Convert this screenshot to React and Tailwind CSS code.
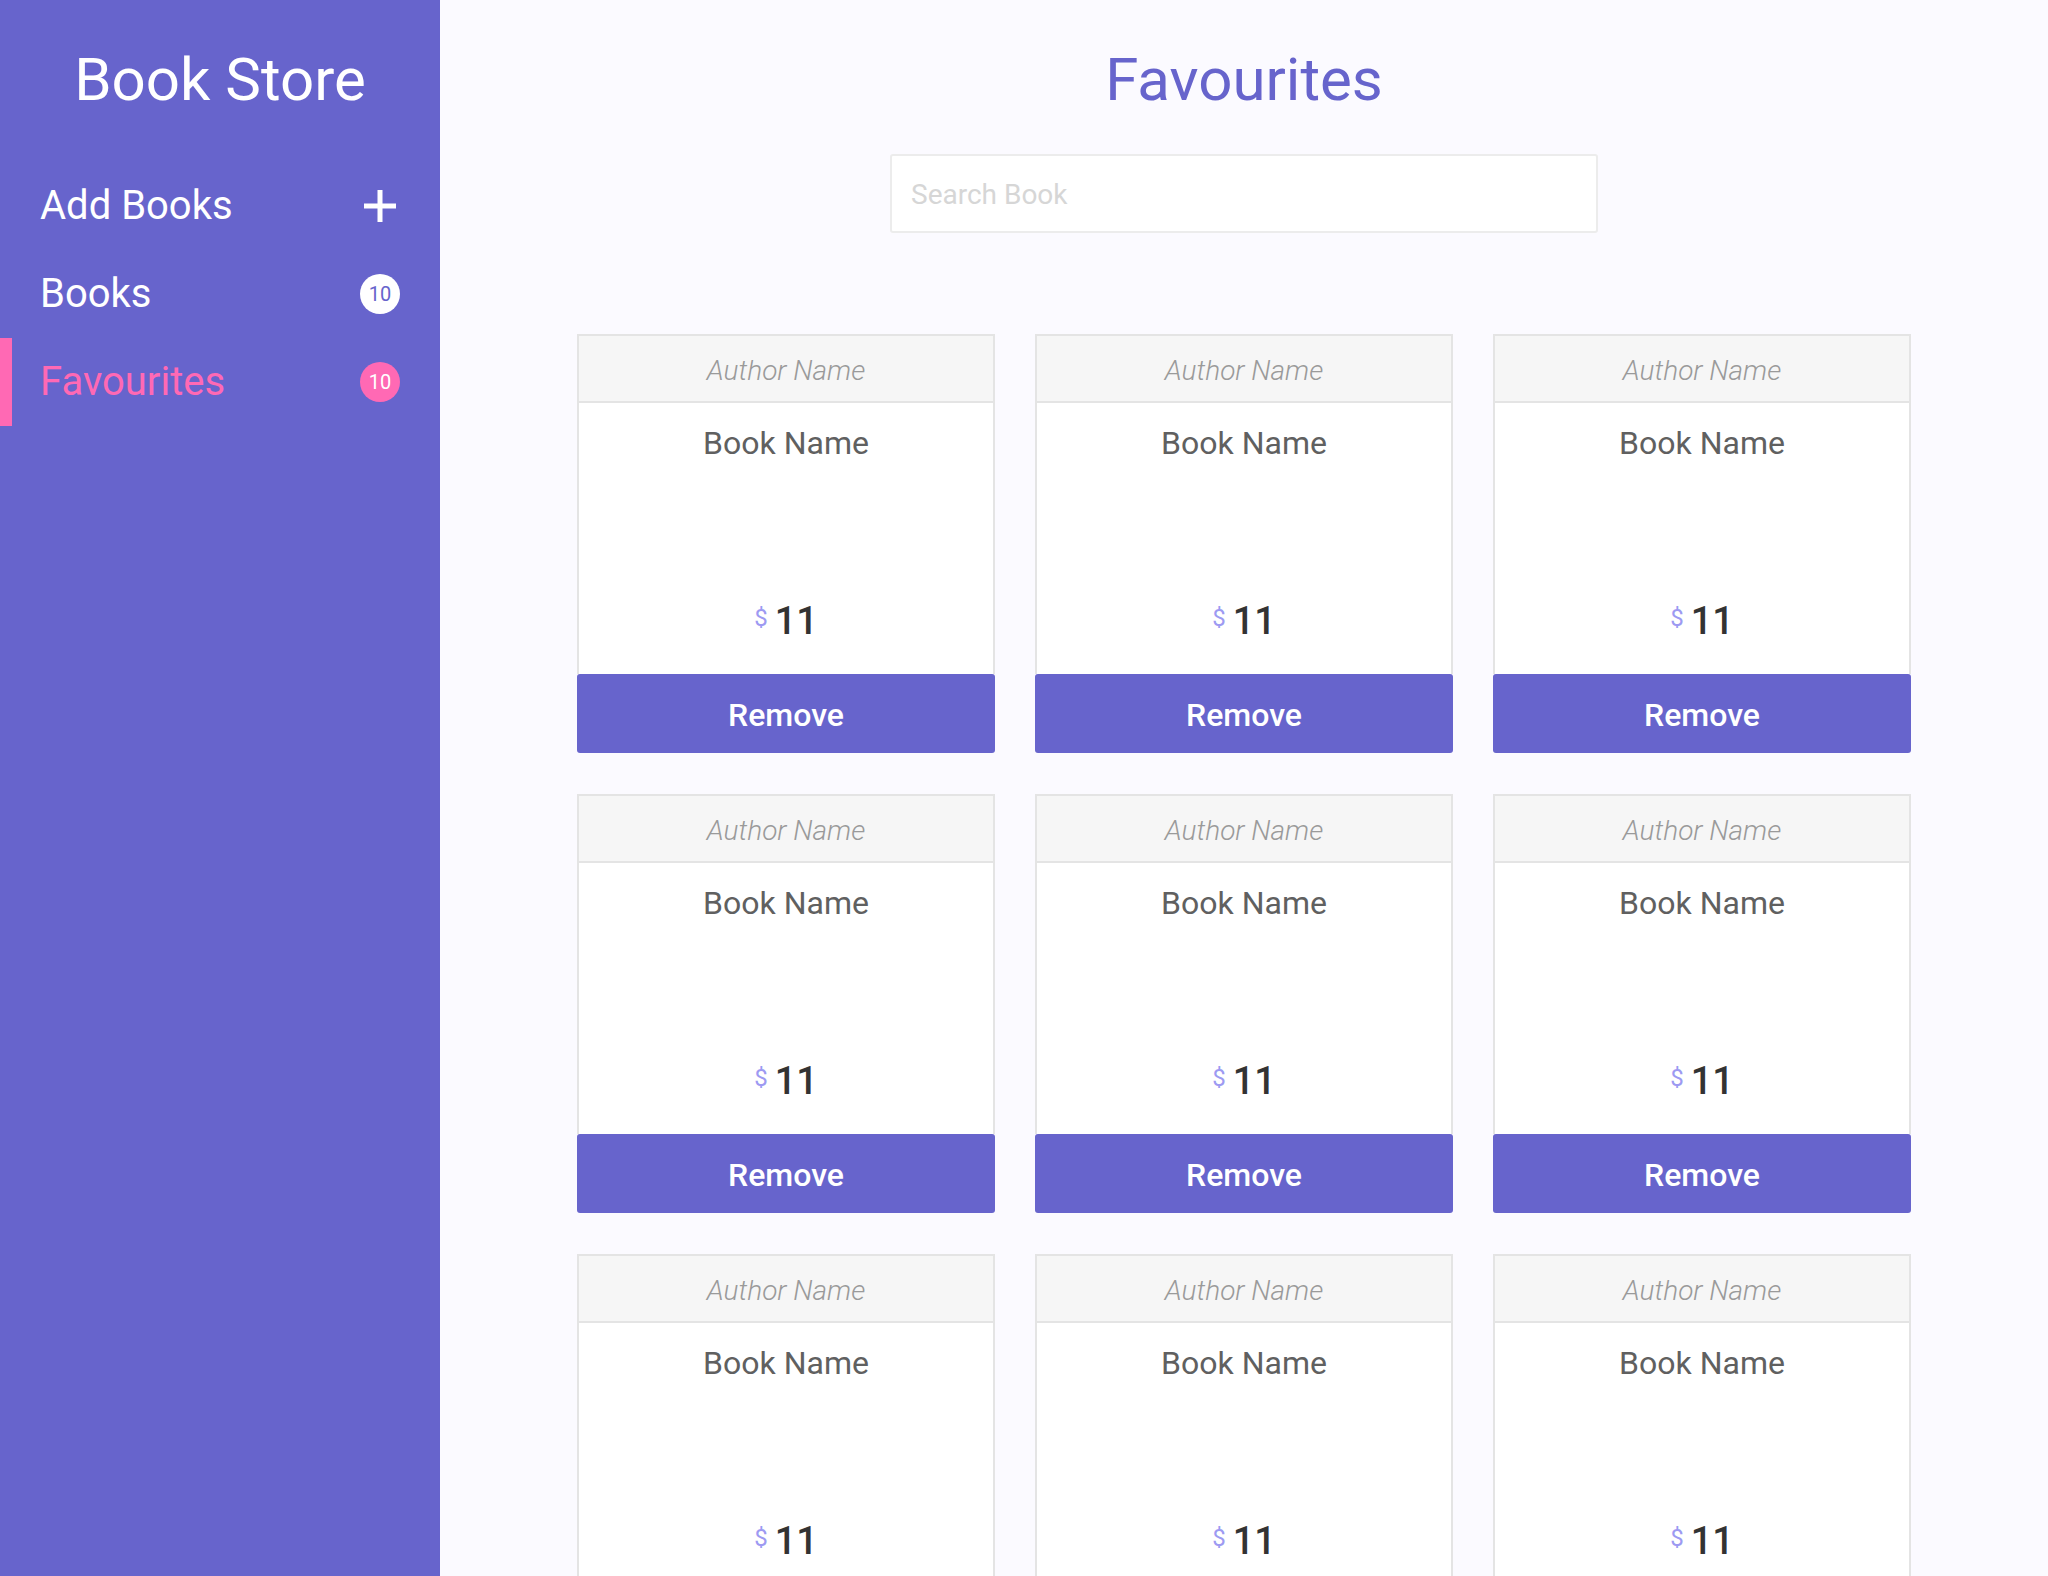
import { useState } from "react"

const BOOKS = Array.from({ length: 10 }, (_, i) => ({
  id: i,
  author: "Author Name",
  name: "Book Name",
  price: 11,
}))

function Badge({ count, active }) {
  return (
    <span
      className={
        active
          ? "w-10 h-10 rounded-full bg-[#ff69b4] text-white text-[20px] leading-none flex items-center justify-center"
          : "w-10 h-10 rounded-full bg-white text-[#6764cc] text-[20px] leading-none flex items-center justify-center"
      }
    >
      {count}
    </span>
  )
}

function PlusIcon() {
  return (
    <svg width="40" height="40" viewBox="0 0 40 40" className="block">
      <path d="M20 4v32M4 20h32" stroke="white" strokeWidth="5" />
    </svg>
  )
}

function NavItem({ label, right, active }) {
  return (
    <div className="relative h-[88px] flex items-center justify-between pl-[40px] pr-[40px]">
      {active && <div className="absolute left-0 top-0 bottom-0 w-3 bg-[#ff69b4]" />}
      <span className={active ? "text-[40px] leading-none text-[#ff69b4]" : "text-[40px] leading-none text-white"}>
        {label}
      </span>
      {right}
    </div>
  )
}

function BookCard({ book, onRemove }) {
  return (
    <div className="flex flex-col">
      <div className="border-2 border-[#e4e4e4] border-b-0 bg-white">
        <div className="h-[67px] pt-[4px] bg-[#f6f6f6] border-b-2 border-[#e4e4e4] flex items-center justify-center">
          <span className="text-[28px] font-light italic text-[#9a9a9a] leading-none">{book.author}</span>
        </div>
        <div className="h-[271px] flex flex-col items-center">
          <div className="pt-[24px] text-[32px] leading-none text-[#606060]">{book.name}</div>
          <div className="mt-auto pb-[34px] flex items-start">
            <span className="text-[24px] leading-none text-[#9d9af2] mt-[4px] mr-[7px]">$</span>
            <span className="text-[38px] leading-none font-medium text-[#333333]">{book.price}</span>
          </div>
        </div>
      </div>
      <button
        onClick={() => onRemove(book.id)}
        className="h-[79px] w-full bg-[#6764cc] rounded-[3px] text-white text-[32px] font-medium leading-none pt-[2px]"
      >
        Remove
      </button>
    </div>
  )
}

export default function App() {
  const [books, setBooks] = useState(BOOKS)
  const [query, setQuery] = useState("")

  const shown = books.filter(b => b.name.toLowerCase().includes(query.toLowerCase()))

  return (
    <div className="min-h-screen flex bg-[#fbfaff]" style={{ fontFamily: "Roboto, 'Liberation Sans', sans-serif" }}>
      <aside className="w-[440px] shrink-0 bg-[#6764cc] min-h-screen">
        <h1 className="pt-[50px] text-[60px] leading-none text-white text-center">Book Store</h1>
        <nav className="mt-[52px]">
          <NavItem label="Add Books" right={<PlusIcon />} />
          <NavItem label="Books" right={<Badge count={10} />} />
          <NavItem label="Favourites" active right={<Badge count={books.length} active />} />
        </nav>
      </aside>

      <main className="flex-1 flex flex-col items-center">
        <h2 className="pt-[50px] text-[60px] leading-none text-[#6764cc]">Favourites</h2>
        <input
          value={query}
          onChange={e => setQuery(e.target.value)}
          placeholder="Search Book"
          className="mt-[44px] w-[708px] h-[79px] bg-white border-2 border-[#ececec] rounded-[3px] px-[19px] pt-[2px] text-[28px] text-[#555] placeholder:text-[#d6d6d6] outline-none"
        />
        <div className="mt-[101px] w-[1334px] grid grid-cols-3 gap-x-[40px] gap-y-[41px] pb-10">
          {shown.map(b => (
            <BookCard key={b.id} book={b} onRemove={id => setBooks(prev => prev.filter(x => x.id !== id))} />
          ))}
        </div>
      </main>
    </div>
  )
}
